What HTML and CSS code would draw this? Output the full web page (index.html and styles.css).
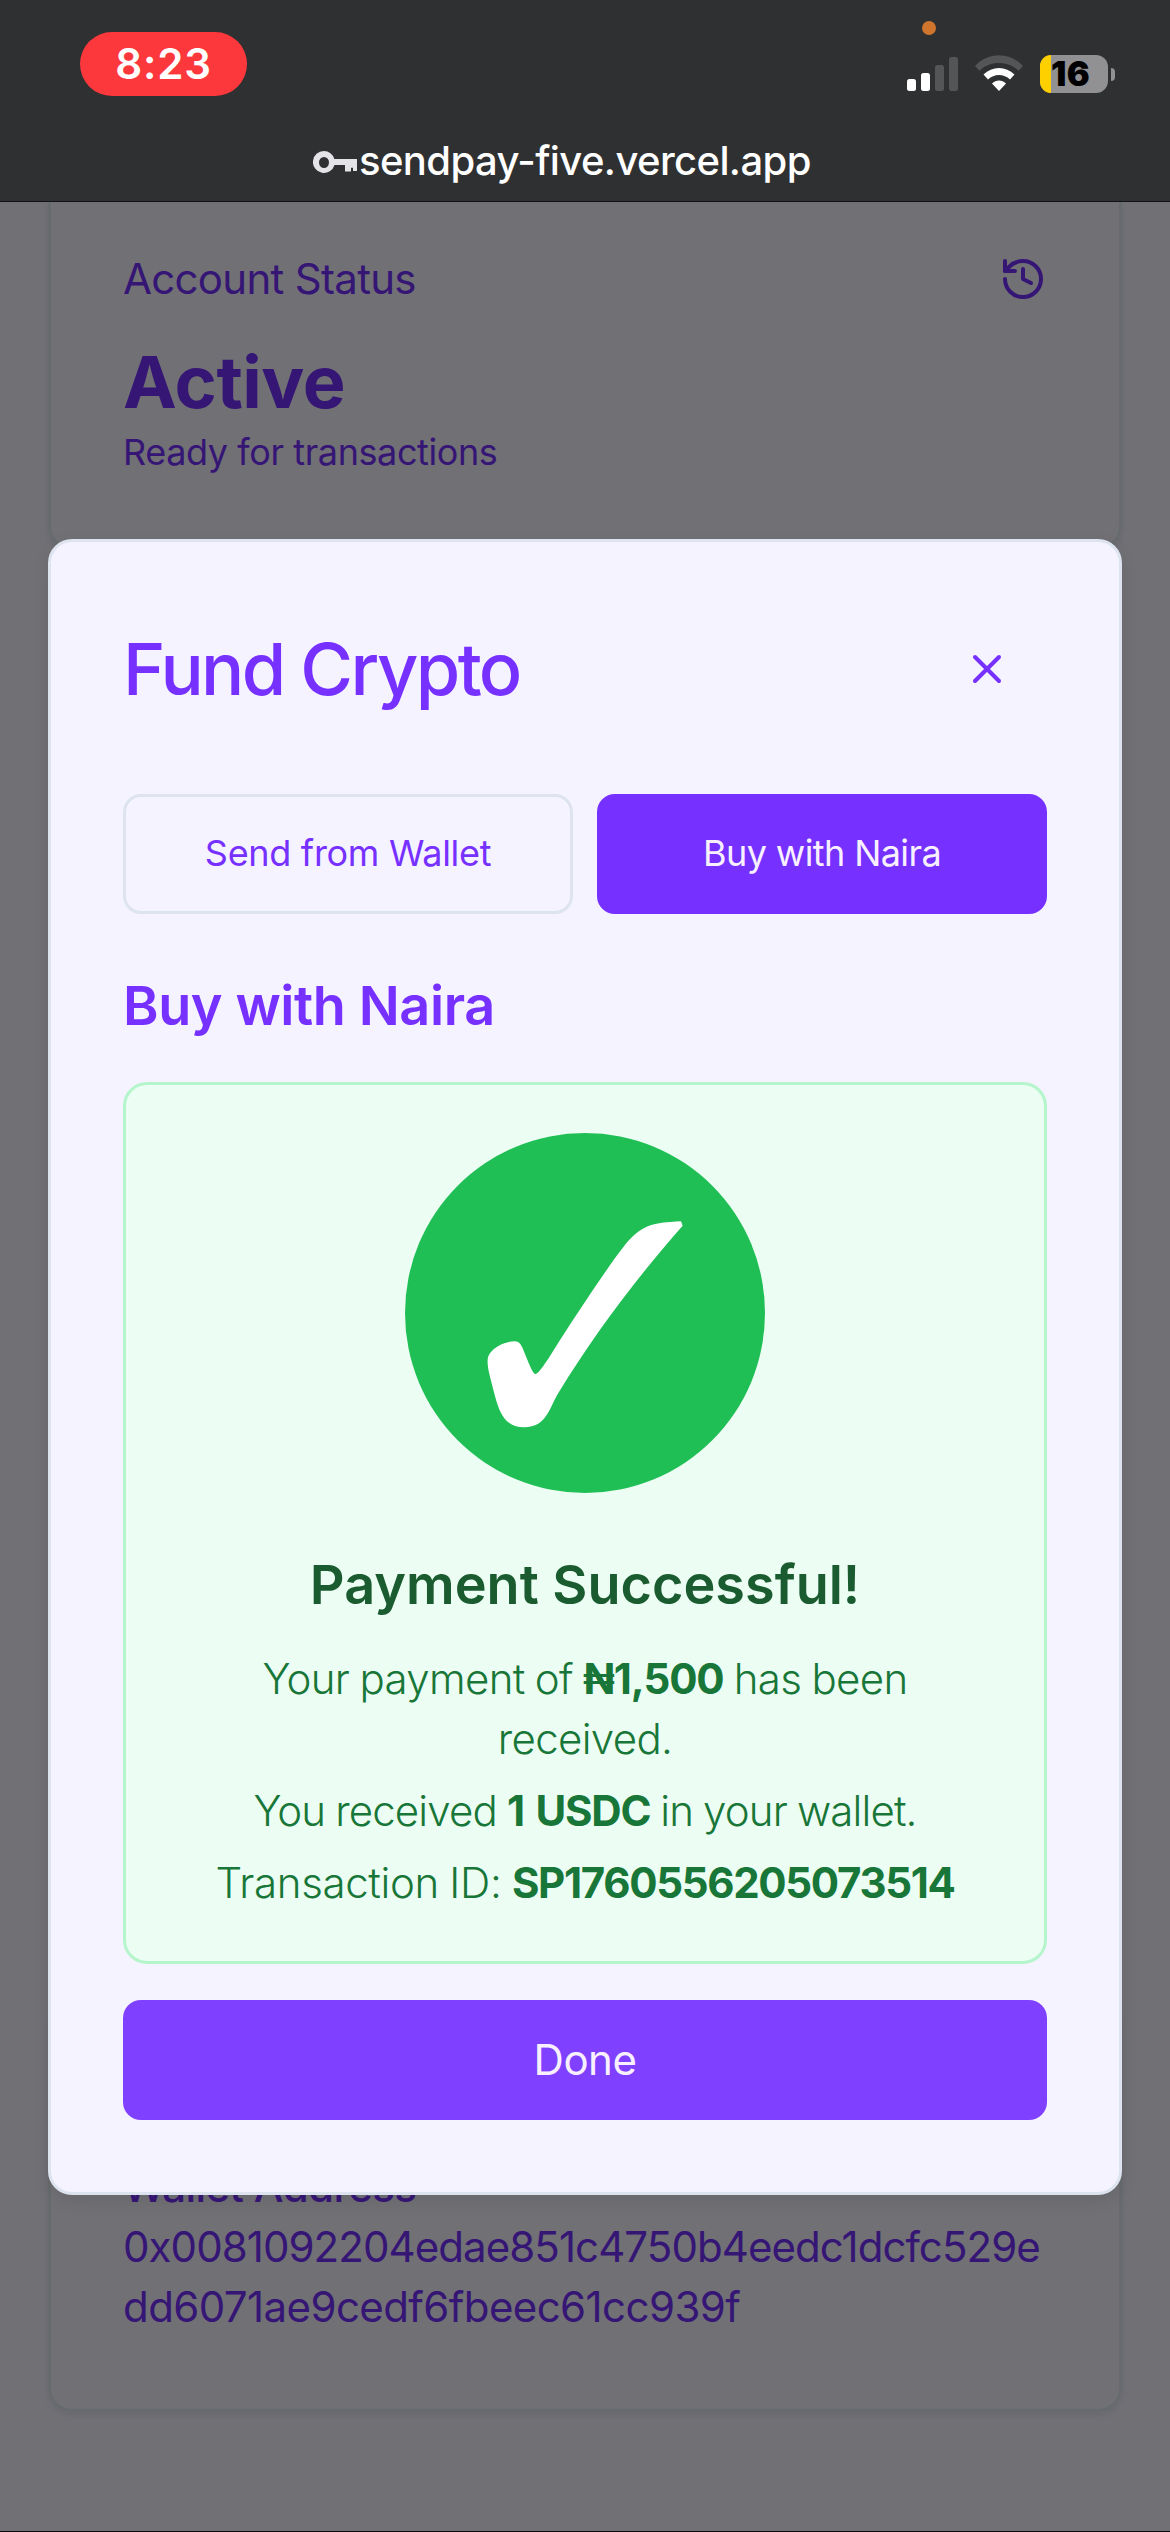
FILE: index.html
```html
<!DOCTYPE html>
<html lang="en">
<head>
<meta charset="utf-8">
<title>SendPay</title>
<link rel="stylesheet" href="styles.css">
</head>
<body>
<header class="browser">
  <div class="status">
    <div class="time">8:23</div>
    <span class="mic-dot"></span>
    <div class="indicators">
      <svg class="signal" viewBox="0 0 51 34">
        <g fill="#fff"><rect y="22" width="9" height="12" rx="2.5"/><rect x="14" y="16" width="9" height="18" rx="2.5"/></g>
        <g fill="#545557"><rect x="28" y="8" width="9" height="26" rx="2.5"/><rect x="42" width="9" height="34" rx="2.5"/></g>
      </svg>
      <svg class="wifi" viewBox="0 0 48 36">
        <path fill="#545557" d="M0 11C13-3.500 35-3.500 48 11L43.500 15.800C33 5.500 15 5.500 4.500 15.800Z"/>
        <path fill="#fff" d="M8.500 19.500C17 10.800 31 10.800 39.500 19.500L35 24.500C29 18.500 19 18.500 13 24.500Z"/>
        <path fill="#fff" d="M17 28.500C21 24.500 27 24.500 31 28.500L24 36Z"/>
      </svg>
      <div class="battery"><span class="level"></span><span class="percent">16</span></div>
      <span class="nub"></span>
    </div>
  </div>
  <div class="address">
    <svg class="key" viewBox="0 0 44 23"><path fill="#e3e3e8" fill-rule="evenodd" d="M11 0A11 11 0 0 1 21.300 8H44V20H40V17A1.500 1.500 0 0 0 38 17V20.500H32V14H21.500A11 11 0 1 1 11 0ZM11 6A5 5.500 0 1 0 11 17A5 5.500 0 1 0 11 6Z"/></svg>
    <span>sendpay-five.vercel.app</span>
  </div>
</header>
<main class="page">
  <section class="card status-card">
    <div class="card-head">
      <h2>Account Status</h2>
      <svg class="icon" viewBox="0 0 24 24"><path d="M3 12a9 9 0 1 0 9-9 9.750 9.750 0 0 0-6.740 2.740L3 8"/><path d="M3 3v5h5"/><path d="M12 7v5l4 2"/></svg>
    </div>
    <p class="state">Active</p>
    <p class="hint">Ready for transactions</p>
  </section>
  <section class="card wallet-card">
    <h2 class="wallet-title">Wallet Address</h2>
    <p class="hash"><span class="hash-start">0x0081092204edae851c4750b4eedc1dcfc529e</span><br><span class="hash-end">dd6071ae9cedf6fbeec61cc939f</span></p>
  </section>
</main>
<div class="overlay">
  <div class="modal" role="dialog">
    <div class="modal-head">
      <h1>Fund Crypto</h1>
      <button class="close" aria-label="Close"><svg class="icon" viewBox="0 0 24 24"><path d="M18 6 6 18"/><path d="m6 6 12 12"/></svg></button>
    </div>
    <div class="tabs">
      <button class="tab">Send from Wallet</button>
      <button class="tab active">Buy with Naira</button>
    </div>
    <h2 class="section-title">Buy with Naira</h2>
    <div class="success">
      <svg class="check" viewBox="75 188 1080 1080">
        <circle cx="615" cy="728" r="540" fill="#20bf55"/>
        <path fill="#fff" d="M323 868C326 836 372 813 403 813C418 813 423 822 431 841C444 872 458 911 467 911C482 908 530 823 560 778C620 688 680 595 725 537C780 463 815 458 903 453L908 466C780 610 640 795 535 968C508 1012 500 1070 433 1071C370 1071 356 1020 340 958C331 922 321 890 323 868Z"/>
      </svg>
      <h3>Payment Successful!</h3>
      <p class="paid">Your payment of <strong>₦1,500</strong> has been<br>received.</p>
      <p class="credited">You received <strong>1 USDC</strong> in your wallet.</p>
      <p class="reference">Transaction ID: <strong>SP1760556205073514</strong></p>
    </div>
    <button class="done">Done</button>
  </div>
</div>
</body>
</html>
```

FILE: styles.css
```css
* { box-sizing: border-box; margin: 0; padding: 0; }
body {
  width: 1170px; height: 2532px; overflow: hidden; position: relative;
  display: flex; flex-direction: column;
  background: #f5f3ff; color: #7630ff;
  font-family: Inter, "Liberation Sans", sans-serif;
}
button { font: inherit; color: inherit; border: 0; background: none; }

.browser { position: relative; z-index: 2; flex: none; height: 202px; background: #2f3031; border-bottom: 1px solid #111113; color: #fff; }
.status { position: relative; height: 127px; padding: 32px 55px 0 80px; display: flex; justify-content: space-between; align-items: flex-start; }
.time { width: 167px; height: 64px; border-radius: 32px; background: #fd383d; text-align: center; font-size: 42px; font-weight: 600; line-height: 64px; letter-spacing: .8px; }
.mic-dot { position: absolute; left: 922px; top: 21px; width: 14px; height: 14px; border-radius: 50%; background: #cf752d; }
.indicators { display: flex; align-items: center; height: 38px; margin-top: 23px; }
.signal { width: 51px; height: 34px; margin: 0 17px 0 0; }
.wifi { width: 48px; height: 36px; margin: 0 17px 2px 0; }
.battery { width: 68px; height: 38px; border-radius: 12px; background: #919193; display: flex; align-items: center; color: #000; }
.level { flex: none; width: 11px; height: 38px; border-radius: 11px 0 0 11px; background: #ffd000; }
.percent { font-size: 34px; line-height: 42px; font-weight: 900; letter-spacing: .5px; }
.nub { width: 4px; height: 13px; margin-left: 3px; border-radius: 0 4px 4px 0; background: #919193; }
.address { display: flex; align-items: center; gap: 2px; padding-left: 313px; height: 66px; font-size: 40px; font-weight: 500; letter-spacing: -.6px; }
.key { width: 44px; height: 23px; margin-top: 4px; }

.page { flex: 1; padding: 0 48px; border-bottom: 1px solid #111; }
.card { border: 3px solid #e0eaee; border-radius: 24px; padding: 0 72px; box-shadow: 0 3px 6px rgba(0,0,0,.07); }
.status-card { height: 348px; border-top: 0; border-radius: 0 0 24px 24px; padding-top: 47px; }
.card-head { display: flex; justify-content: space-between; align-items: center; height: 60px; }
.icon { width: 48px; height: 48px; fill: none; stroke: currentColor; stroke-width: 2; stroke-linecap: round; stroke-linejoin: round; }
.card h2 { font-size: 42px; line-height: 60px; }
.card-head h2 { font-weight: 400; letter-spacing: -.7px; }
.state { font-size: 72px; line-height: 72px; font-weight: 700; letter-spacing: -.5px; margin-top: 37px; }
.hint { font-size: 36px; line-height: 48px; margin-top: 10px; letter-spacing: -.4px; }
.wallet-card { margin-top: 1450px; padding-top: 154px; height: 412px; }
.wallet-title.wallet-title { font-weight: 500; letter-spacing: -.6px; }
.hash { font-size: 42px; line-height: 60px; white-space: nowrap; }
.hash-start { letter-spacing: -.93px; }
.hash-end { letter-spacing: -.58px; }

.overlay { position: absolute; inset: 0; padding: 539px 48px 0; background: rgba(0,0,0,.543); }
.modal { height: 1656px; border: 3px solid #dde4ef; border-radius: 24px; background: #f5f3ff; padding: 72px; display: flex; flex-direction: column; box-shadow: 0 6px 18px rgba(0,0,0,.08); }
.modal-head { display: flex; justify-content: space-between; align-items: center; height: 110px; }
.modal h1 { font-size: 72px; line-height: 72px; font-weight: 500; letter-spacing: -2.600px; }
.close { width: 120px; height: 108px; display: flex; align-items: center; justify-content: center; }
.tabs { display: grid; grid-template-columns: 1fr 1fr; gap: 24px; margin-top: 70px; }
.tab { height: 120px; border-radius: 18px; font-size: 36px; border: 3px solid #dde4ef; letter-spacing: -.3px; padding-bottom: 2px; }
.tab.active { background: #7630ff; border-color: #7630ff; color: #f8f0ff; letter-spacing: -.6px; }
.section-title { font-size: 54px; line-height: 54px; font-weight: 600; letter-spacing: -.4px; margin: 65px 0 49px; }
.success { border: 3px solid #b4f5cc; border-radius: 24px; background: #ecfdf3; height: 882px; padding-top: 48px; text-align: center; color: #187638; white-space: nowrap; }
.check { display: block; width: 360px; height: 360px; margin: 0 auto 65px; }
.success h3 { font-size: 54px; line-height: 54px; font-weight: 600; color: #1a5c30; margin-bottom: 37px; }
.success p { font-size: 42px; line-height: 60px; font-weight: 340; margin-bottom: 12px; }
.success strong { font-weight: 700; }
.paid { letter-spacing: -.65px; word-spacing: -1px; }
.paid strong { letter-spacing: -1.100px; }
.credited { letter-spacing: -.85px; word-spacing: -1px; }
.credited strong { letter-spacing: -1.200px; word-spacing: 3px; }
.reference { letter-spacing: -.35px; word-spacing: -1px; }
.reference strong { letter-spacing: -1.320px; }
.done { height: 120px; margin-top: 36px; padding-bottom: 2px; border-radius: 18px; background: #8040ff; color: #f8f0ff; font-size: 42px; letter-spacing: -.5px; }
```
